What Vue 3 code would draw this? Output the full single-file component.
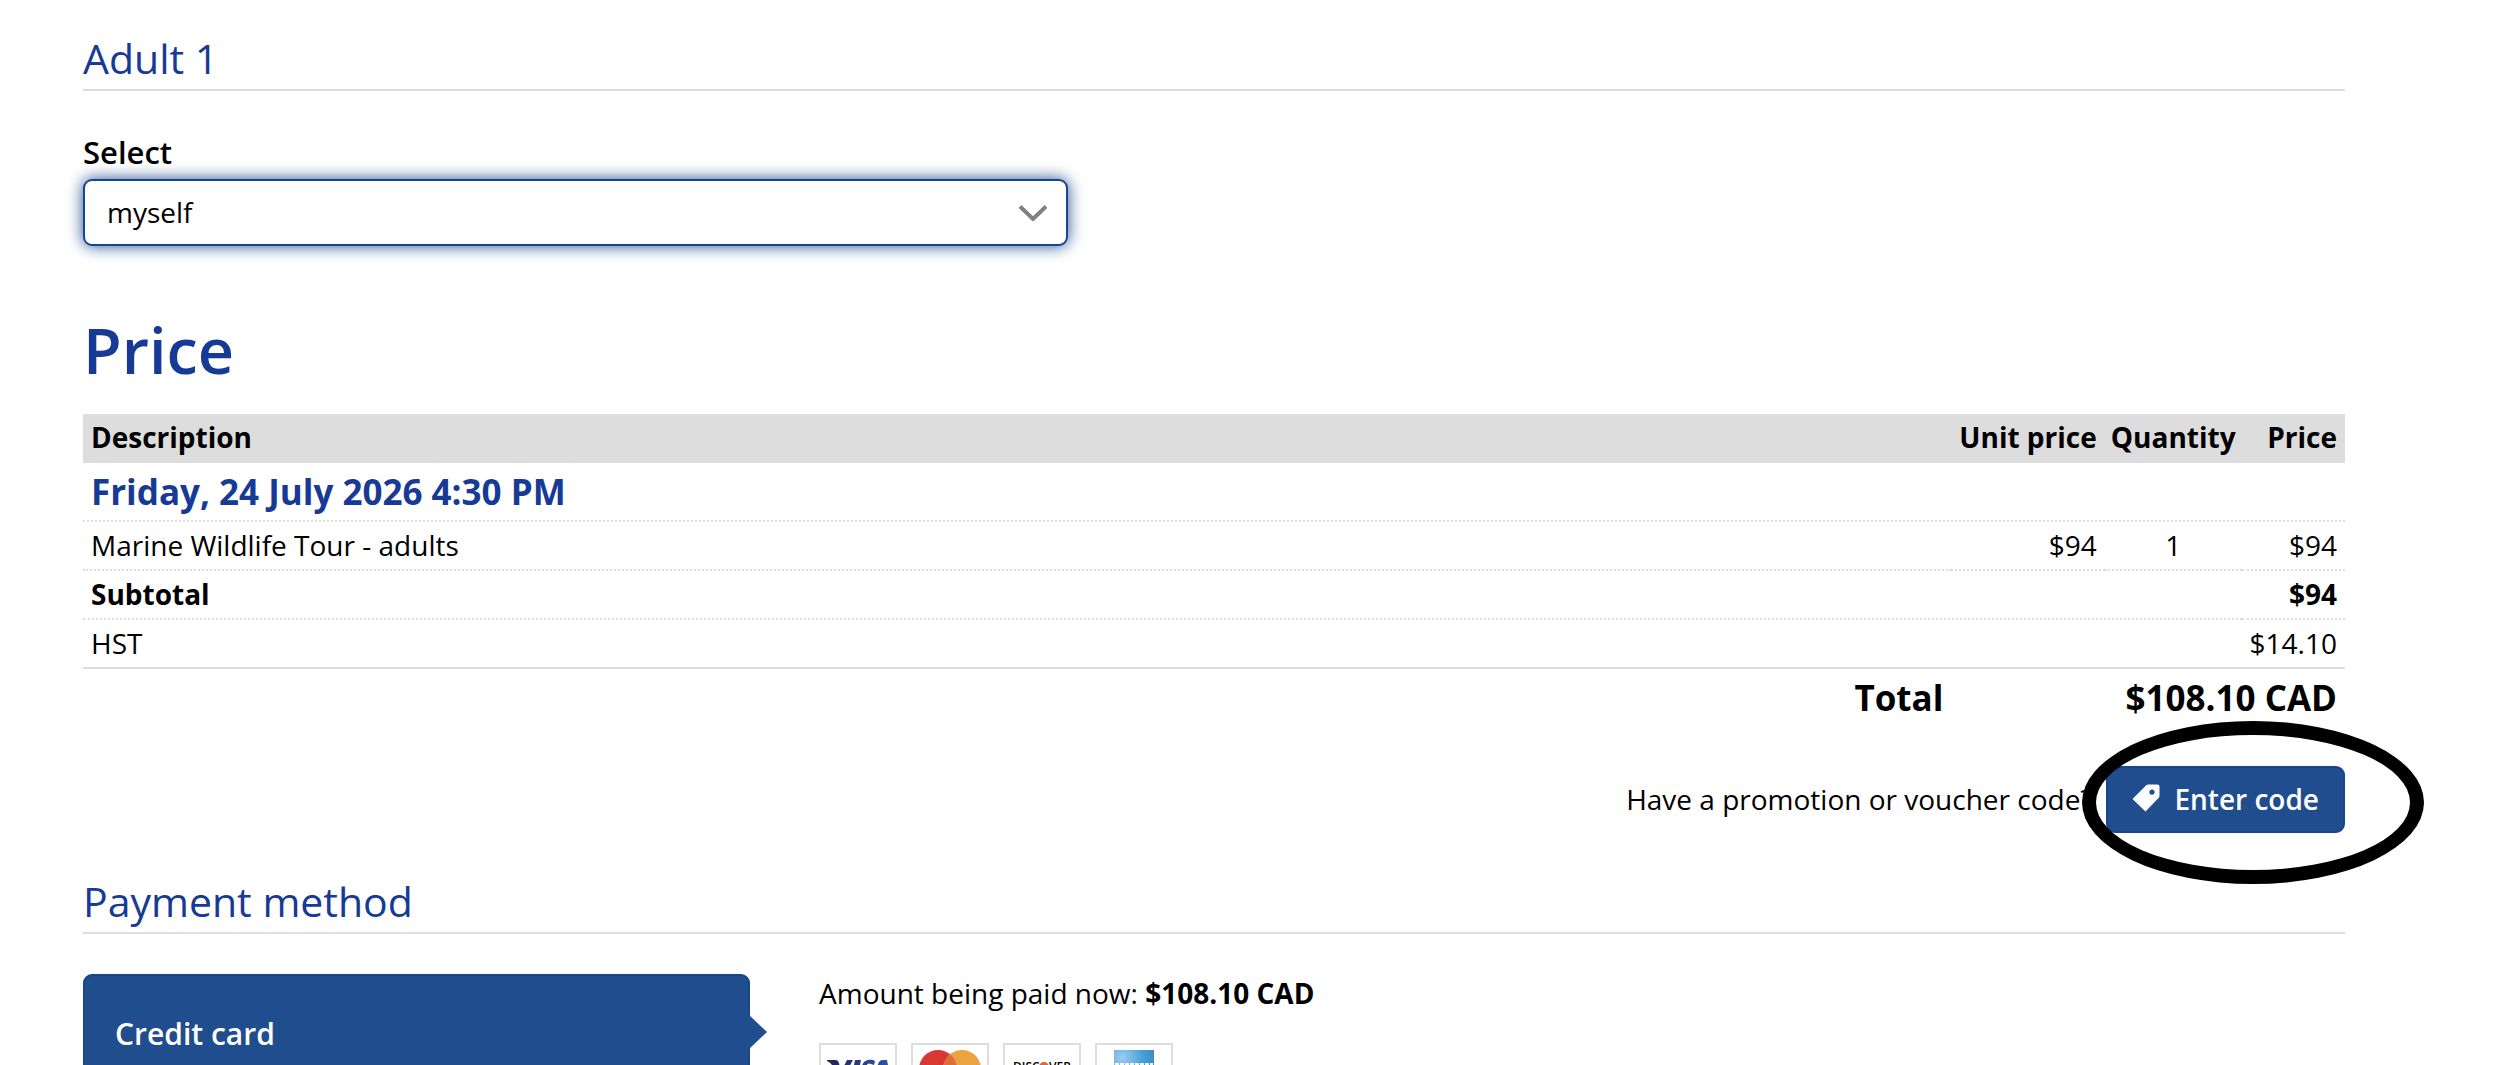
<script setup>
import { ref } from 'vue'

const traveller = ref('myself')
const total = '$108.10 CAD'
const lines = [
  { name: 'Marine Wildlife Tour - adults', unit: '$94', quantity: 1, price: '$94' },
]
</script>

<template>
  <main class="page">
    <section class="traveller">
      <h2 class="section-title">Adult 1</h2>
      <label class="field-label" for="traveller">Select</label>
      <div class="select-wrap">
        <select id="traveller" v-model="traveller">
          <option value="myself">myself</option>
          <option value="other">someone else</option>
        </select>
        <svg class="chevron" viewBox="0 0 28 16" aria-hidden="true">
          <path d="M1 1.5 14 14 27 1.5" fill="none" stroke="#808080" stroke-width="4" />
        </svg>
      </div>
    </section>

    <section class="price">
      <h1>Price</h1>
      <table>
        <thead>
          <tr>
            <th class="description" scope="col">Description</th>
            <th class="num" scope="col">Unit price</th>
            <th class="mid" scope="col">Quantity</th>
            <th class="num" scope="col">Price</th>
          </tr>
        </thead>
        <tbody>
          <tr class="date">
            <th colspan="4" scope="rowgroup">Friday, 24 July 2026 4:30 PM</th>
          </tr>
          <tr v-for="line in lines" :key="line.name">
            <td>{{ line.name }}</td>
            <td class="num">{{ line.unit }}</td>
            <td class="mid">{{ line.quantity }}</td>
            <td class="num">{{ line.price }}</td>
          </tr>
          <tr class="subtotal">
            <td colspan="3">Subtotal</td>
            <td class="num">$94</td>
          </tr>
          <tr class="tax">
            <td colspan="3">HST</td>
            <td class="num">$14.10</td>
          </tr>
        </tbody>
        <tfoot>
          <tr>
            <th class="num" scope="row">Total</th>
            <td class="num" colspan="3">{{ total }}</td>
          </tr>
        </tfoot>
      </table>
      <div class="promo">
        <span>Have a promotion or voucher code?</span>
        <div class="promo-action">
          <button type="button" class="code-button">
            <svg class="tag" viewBox="0 0 28 28" aria-hidden="true">
              <path
                fill="#fff"
                fill-rule="evenodd"
                d="M14 1.5Q15 .5 16.500 .5H25.500Q27.500 .5 27.500 2.500V11.500Q27.500 13 26.500 14L13.500 27.500 .5 15ZM20 5.500a2.600 2.600 0 1 0 0 5.200 2.600 2.600 0 0 0 0-5.200Z"
              />
            </svg>
            Enter code
          </button>
          <span class="ring" aria-hidden="true"></span>
        </div>
      </div>
    </section>

    <section class="payment">
      <h2 class="section-title">Payment method</h2>
      <div class="payment-body">
        <button type="button" class="method">Credit card</button>
        <div class="details">
          <p>Amount being paid now: <strong>{{ total }}</strong></p>
          <ul class="cards">
            <li>
              <svg viewBox="0 0 74 46" role="img" aria-label="Visa">
                <defs>
                  <linearGradient id="visa" x1="0" x2="1">
                    <stop offset="0" stop-color="#232256" />
                    <stop offset="1" stop-color="#2f55a8" />
                  </linearGradient>
                </defs>
                <path fill="url(#visa)" d="M6 15h9q2 0 3 3l2 9 6-12h6L21 35h-6l-4-15q-2-3-5-4ZM34 15h6l-4 20h-6ZM54 16l-1 4q-7-3-7 0c0 2 7 3 5 9-2 7-9 7-14 5l1-5q8 4 9 0c0-2-7-3-6-8 2-7 9-7 13-5ZM50 35 58 17q1-2 4-2h4l4 20h-6l-1-4h-6l-2 4Zm10-9h3l-1-5Z" />
              </svg>
            </li>
            <li>
              <svg viewBox="0 0 74 46" role="img" aria-label="Mastercard">
                <circle cx="25" cy="24" r="19" fill="#d93832" />
                <circle cx="49" cy="24" r="19" fill="#e9a440" />
                <path fill="#e06c3a" d="M37 9.300a19 19 0 0 1 0 29.400 19 19 0 0 1 0-29.400Z" />
              </svg>
            </li>
            <li>
              <svg viewBox="0 0 74 46" role="img" aria-label="Discover">
                <text x="8" y="26" class="discover-text">DISC</text>
                <circle cx="39" cy="22" r="5" fill="#e0663a" />
                <text x="44" y="26" class="discover-text">VER</text>
              </svg>
            </li>
            <li>
              <svg viewBox="0 0 74 46" role="img" aria-label="American Express">
                <defs>
                  <radialGradient id="amex" cx=".2" cy=".2" r=".9">
                    <stop offset="0" stop-color="#9dcdee" />
                    <stop offset=".6" stop-color="#429fd8" />
                    <stop offset="1" stop-color="#3d83c4" />
                  </radialGradient>
                </defs>
                <path fill="url(#amex)" d="M17 5h40v38H17Z" />
                <path stroke="#fff" stroke-width="6" stroke-dasharray="4 1" d="M18 21h38" />
              </svg>
            </li>
          </ul>
        </div>
      </div>
    </section>
  </main>
</template>

<style>
body {
  margin: 0;
  background: #fff;
}
</style>

<style scoped>
.page {
  box-sizing: border-box;
  height: 100vh;
  overflow: hidden;
  padding: 30px 155px 0 83px;
  font-family: "Open Sans", "Noto Sans", sans-serif;
  font-size: 28px;
  line-height: 39px;
  color: #000;
}

.section-title {
  margin: 0;
  padding-bottom: 2px;
  border-bottom: 2px solid #ddd;
  font-size: 41px;
  line-height: 57px;
  font-weight: 400;
  color: #163a96;
}

.field-label {
  display: block;
  margin: 40px 0 5px;
  font-size: 31px;
  line-height: 43px;
  font-weight: 600;
}

.select-wrap {
  position: relative;
  width: 985px;
  max-width: 100%;
}

select {
  display: block;
  box-sizing: border-box;
  width: 100%;
  height: 67px;
  padding: 0 72px 0 22px;
  border: 2px solid #174690;
  border-radius: 9px;
  outline: none;
  background: #fff;
  box-shadow: 0 0 16px #204d8e;
  appearance: none;
  font: inherit;
  color: inherit;
}

.chevron {
  position: absolute;
  top: 26px;
  right: 21px;
  width: 28px;
  height: 16px;
  pointer-events: none;
}

h1 {
  margin: 60px 0 21px;
  font-size: 63px;
  line-height: 87px;
  font-weight: 600;
  color: #163a96;
}

table {
  width: 100%;
  border-spacing: 0;
}

th,
td {
  padding: 4px 8px;
  text-align: left;
  white-space: nowrap;
}

thead th {
  padding: 4px 8px 6px;
  background: #ddd;
}

tbody th,
tbody td {
  border-bottom: 2px dotted #ddd;
}

.description {
  width: 100%;
}

.date th {
  font-size: 35px;
  line-height: 49px;
  color: #163a96;
}

.subtotal {
  font-weight: 700;
}

.tax td {
  border-bottom-style: solid;
}

tfoot th,
tfoot td {
  font-size: 35px;
  line-height: 49px;
  font-weight: 700;
}

.num,
thead .num,
tfoot .num {
  text-align: right;
}

.mid,
thead .mid {
  padding-right: 6px;
  padding-left: 6px;
  text-align: center;
}

.promo {
  display: flex;
  justify-content: flex-end;
  align-items: center;
  gap: 14px;
  margin-top: 40px;
}

.promo-action {
  position: relative;
}

.code-button {
  display: flex;
  align-items: center;
  gap: 14px;
  height: 67px;
  padding: 0 24px;
  border: 2px solid #174690;
  border-radius: 9px;
  background: #204d8e;
  font: inherit;
  font-weight: 600;
  color: #fff;
}

.tag {
  width: 28px;
  height: 28px;
  margin-bottom: 4px;
}

.ring {
  position: absolute;
  inset: -45px -79px -51px -24px;
  border: 14px solid #000;
  border-radius: 50%;
  pointer-events: none;
}

.payment {
  margin-top: 40px;
}

.payment-body {
  display: flex;
  align-items: flex-start;
  gap: 69px;
  margin-top: 40px;
}

.method {
  position: relative;
  width: 667px;
  height: 118px;
  padding: 0 30px;
  border: 2px solid #174690;
  border-radius: 9px;
  background: #204d8e;
  font: inherit;
  font-size: 30px;
  font-weight: 600;
  text-align: left;
  color: #fff;
}

.method::after {
  content: "";
  position: absolute;
  top: 38px;
  left: 100%;
  border: 18px solid transparent;
  border-right-width: 0;
  border-left: 19px solid #204d8e;
}

.details p {
  margin: 0 0 30px;
}

.cards {
  display: flex;
  gap: 14px;
  margin: 0;
  padding: 0;
  list-style: none;
}

.cards li {
  display: flex;
  border: 2px solid #ddd;
}

.cards svg {
  width: 74px;
  height: 46px;
}

.discover-text {
  font-size: 12px;
  font-weight: 600;
}
</style>
